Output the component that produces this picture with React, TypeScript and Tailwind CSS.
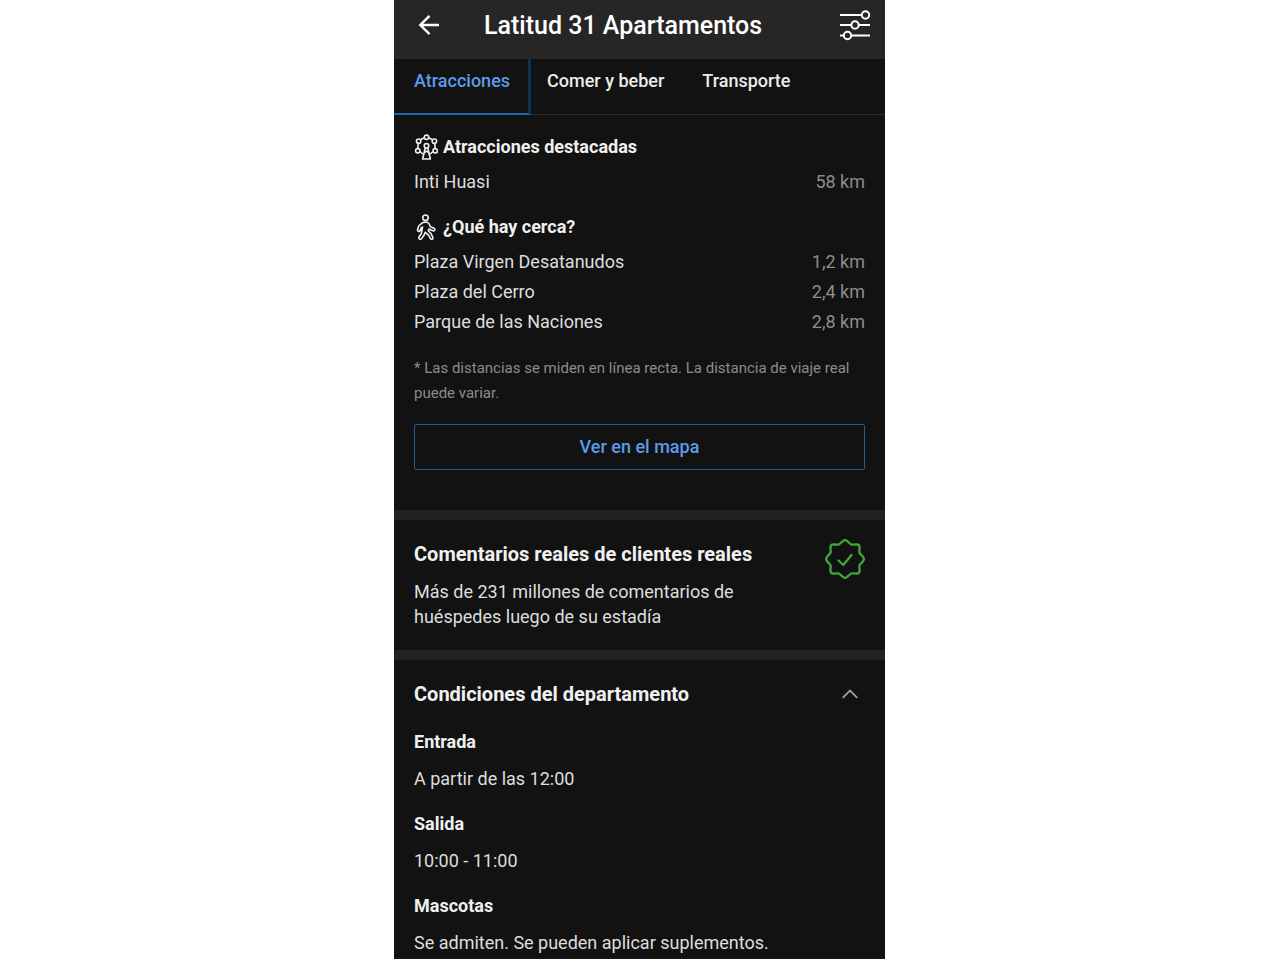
import type { ReactNode } from "react";

type Place = { name: string; distance: string };

const highlights: Place[] = [{ name: "Inti Huasi", distance: "58 km" }];

const nearby: Place[] = [
  { name: "Plaza Virgen Desatanudos", distance: "1,2 km" },
  { name: "Plaza del Cerro", distance: "2,4 km" },
  { name: "Parque de las Naciones", distance: "2,8 km" },
];

function BackIcon() {
  return (
    <svg width="22" height="22" viewBox="0 0 22 22" fill="none" stroke="currentColor" strokeWidth="2.4" aria-hidden="true">
      <path d="M11.5 1.8 2.3 11l9.2 9.2M2.3 11H21" />
    </svg>
  );
}

function FiltersIcon() {
  return (
    <svg width="32" height="32" viewBox="0 0 32 32" fill="none" stroke="currentColor" strokeWidth="2" aria-hidden="true">
      <path d="M1 6h21M1 16h11M20 16h11M1 26.500h3M12 26.500h19" />
      <circle cx="26.500" cy="6" r="3.700" />
      <circle cx="16" cy="16" r="3.700" />
      <circle cx="8.500" cy="26.500" r="3.700" />
    </svg>
  );
}

function FerrisWheelIcon() {
  return (
    <svg width="24" height="26" viewBox="0 0 24 26" fill="none" stroke="currentColor" strokeWidth="1.6" strokeLinejoin="round" aria-hidden="true">
      <circle cx="12.500" cy="3.300" r="2.200" />
      <circle cx="4.600" cy="7.200" r="2.200" />
      <circle cx="20.400" cy="7.200" r="2.200" />
      <circle cx="3.800" cy="16.800" r="2.200" />
      <circle cx="21.200" cy="16.800" r="2.200" />
      <circle cx="12.500" cy="11.800" r="2.300" />
      <path d="M10.300 3.700 6.500 5.800M14.700 3.700 18.500 5.800M4.200 9.400l-.4 5.200M20.800 9.400l.4 5.200M5.900 17.500 8.800 20M19.100 17.500 16.200 20M11.300 13.800 8.600 25h7.800l-2.700-11.200M10 19.200l2.500-2.200 2.500 2.200" />
    </svg>
  );
}

function WalkingIcon() {
  return (
    <svg width="24" height="26" viewBox="0 0 24 26" fill="none" stroke="currentColor" strokeWidth="1.600" strokeLinejoin="round" strokeLinecap="round" aria-hidden="true">
      <circle cx="11.500" cy="3.700" r="2.700" />
      <path d="M8.200 8.900Q10.200 7.800 13 8.300Q15 8.800 15.800 11.200L16.400 12.700L20 14.200Q21.300 15 20.700 16.200Q20.100 17.200 18.900 16.800L14.800 15.100L14.400 17L17 19.500L18.800 23.300Q19.200 24.900 17.900 25.200Q16.800 25.400 16.200 24.200L14.500 21.200L11.200 18.300L10.100 21L7.600 24.600Q6.400 25.700 5.300 24.800Q4.400 23.900 5.100 22.800L7.300 19.700L8.600 13L7 14.100L6.200 16.500Q5.400 17.800 4.200 17.200Q3.200 16.600 3.600 15.400L4.700 12Z" />
    </svg>
  );
}

function VerifiedIcon() {
  return (
    <svg className="shrink-0 text-[#43a63c]" width="40" height="40" viewBox="0 0 40 40" fill="none" stroke="currentColor" strokeWidth="2.300" strokeLinejoin="round" strokeLinecap="round" aria-hidden="true">
      <path d="M17.800 2.100Q20 .2 22.200 2.100L25.400 5Q26.300 5.800 27.500 5.700L31.500 5.400Q34.600 5.400 34.600 8.500L34.300 12.500Q34.200 13.700 35 14.600L37.900 17.800Q39.800 20 37.900 22.200L35 25.400Q34.200 26.300 34.300 27.500L34.600 31.500Q34.600 34.600 31.500 34.600L27.500 34.300Q26.300 34.200 25.400 35L22.200 37.900Q20 39.800 17.800 37.900L14.600 35Q13.700 34.200 12.500 34.300L8.500 34.600Q5.400 34.600 5.400 31.500L5.700 27.500Q5.800 26.300 5 25.400L2.100 22.200Q.2 20 2.100 17.800L5 14.600Q5.800 13.700 5.700 12.500L5.400 8.500Q5.400 5.400 8.500 5.400L12.500 5.700Q13.700 5.800 14.600 5Z" />
      <path d="M13.500 21.500l4.800 4.500L26.500 16" />
    </svg>
  );
}

function ChevronUpIcon() {
  return (
    <svg width="16" height="10" viewBox="0 0 16 10" fill="none" stroke="currentColor" strokeWidth="1.800" strokeLinecap="round" aria-hidden="true">
      <path d="M1.200 8.400 8 1.600l6.800 6.800" />
    </svg>
  );
}

function PlaceGroup({ icon, title, places }: { icon: ReactNode; title: string; places: Place[] }) {
  return (
    <section>
      <h2 className="mb-[5px] flex items-center gap-[5px] font-bold text-[#f0f0f0]">
        {icon}
        {title}
      </h2>
      <ul>
        {places.map((place) => (
          <li key={place.name} className="flex justify-between">
            <span>{place.name}</span>
            <span className="text-[#8c8c8c]">{place.distance}</span>
          </li>
        ))}
      </ul>
    </section>
  );
}

function Condition({ title, children }: { title: string; children: ReactNode }) {
  return (
    <div>
      <h3 className="font-bold text-[#f0f0f0]">{title}</h3>
      <p className="mt-[7px]">{children}</p>
    </div>
  );
}

export default function App() {
  return (
    <div className="bg-white pr-px font-['Roboto',sans-serif]">
      <div className="mx-auto max-w-[491px] bg-[#121212] text-[18px] leading-[30px] text-[#dedede]">
        <header className="flex h-[59px] items-center bg-[#262626] pr-3.5 pb-[7px] pl-6 text-white">
          <button type="button" aria-label="Volver" className="mr-11 pb-0.5">
            <BackIcon />
          </button>
          <h1 className="flex-1 text-[25px] font-medium">Latitud 31 Apartamentos</h1>
          <button type="button" aria-label="Filtros" className="pb-0.5">
            <FiltersIcon />
          </button>
        </header>

        <nav className="flex h-14 border-b border-[#2b2b2b] font-medium text-[#ececec]">
          <a href="#atracciones" aria-current="page" className="-mb-px border-r-3 border-b-2 border-r-[#0d3350] border-b-[#1668ae] pt-[7px] pr-[18px] pl-5 text-[#5b9bea]">
            Atracciones
          </a>
          <a href="#comer" className="pt-[7px] pr-[18px] pl-4">Comer y beber</a>
          <a href="#transporte" className="px-5 pt-[7px]">Transporte</a>
        </nav>

        <main>
          <div className="px-5 pt-[17px] pb-10">
            <div className="flex flex-col gap-[15px]">
              <PlaceGroup icon={<FerrisWheelIcon />} title="Atracciones destacadas" places={highlights} />
              <PlaceGroup icon={<WalkingIcon />} title="¿Qué hay cerca?" places={nearby} />
            </div>
            <p className="mt-[19px] text-[15px] leading-[25px] text-[#8c8c8c]">
              * Las distancias se miden en línea recta. La distancia de viaje real puede variar.
            </p>
            <button type="button" className="mt-[18px] h-[46px] w-full rounded-xs border border-[#1d5c94] font-medium text-[#5b9bea]">
              Ver en el mapa
            </button>
          </div>

          <section className="flex items-start justify-between border-t-10 border-[#222222] px-5 pt-[19px] pb-[21px]">
            <div className="max-w-[350px]">
              <h2 className="text-[20px] font-bold text-[#f0f0f0]">Comentarios reales de clientes reales</h2>
              <p className="mt-2.5 leading-[25px]">
                Más de 231 millones de comentarios de huéspedes luego de su estadía
              </p>
            </div>
            <VerifiedIcon />
          </section>

          <section className="border-t-10 border-[#222222] px-5 pt-[19px] pb-px">
            <div className="mb-[18px] flex items-center justify-between pr-[7px]">
              <h2 className="text-[20px] font-bold text-[#f0f0f0]">Condiciones del departamento</h2>
              <button type="button" aria-label="Contraer condiciones" aria-expanded="true" className="text-[#a0a0a0]">
                <ChevronUpIcon />
              </button>
            </div>
            <div className="flex flex-col gap-[15px]">
              <Condition title="Entrada">A partir de las 12:00</Condition>
              <Condition title="Salida">10:00 - 11:00</Condition>
              <Condition title="Mascotas">Se admiten. Se pueden aplicar suplementos.</Condition>
            </div>
          </section>
        </main>
      </div>
    </div>
  );
}
